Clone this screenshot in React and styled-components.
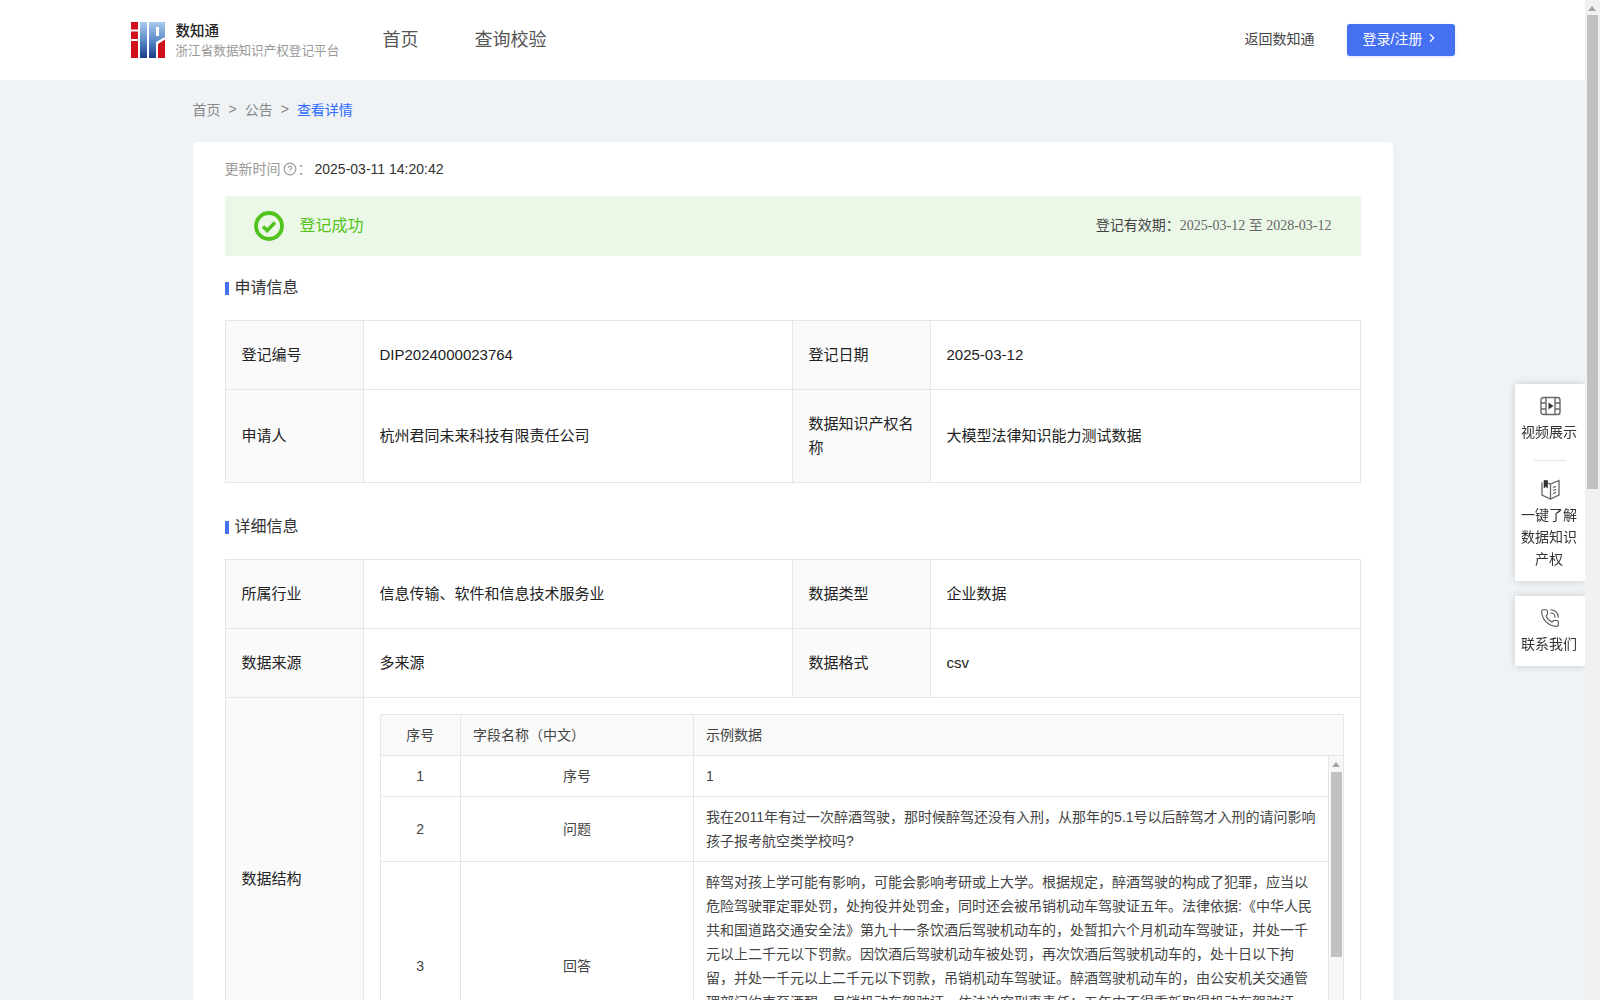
import React from "react";
import styled, { createGlobalStyle } from "styled-components";
import { ChevronRight, CircleHelp, PhoneCall } from "lucide-react";

const GlobalStyle = createGlobalStyle`
  html, body {
    margin: 0;
    height: 100%;
    overflow: hidden;
    background: #eff3f6;
    color: #333;
    font-family: "Liberation Sans", "Noto Sans CJK SC", sans-serif;
    font-size: 14px;
  }
  * { box-sizing: border-box; }
`;

const Page = styled.div`
  width: 1585px;
`;

const Header = styled.header`
  height: 80px;
  background: #fff;
  display: flex;
  justify-content: center;
`;

const HeaderInner = styled.div`
  width: 1324px;
  display: flex;
  align-items: center;
`;

const Brand = styled.div`
  display: flex;
  align-items: center;
  gap: 10px;
  width: 252px;
`;

const BrandText = styled.div`
  display: flex;
  flex-direction: column;
  gap: 2px;
  padding-top: 2px;
`;

const BrandName = styled.div`
  font-size: 14.5px;
  line-height: 18px;
  font-weight: 500;
  color: #222;
`;

const BrandSub = styled.div`
  font-size: 12.6px;
  line-height: 18px;
  color: #999;
`;

const Nav = styled.nav`
  display: flex;
  gap: 56px;
  flex: 1;
  padding-bottom: 4px;
`;

const NavLink = styled.a`
  font-size: 18px;
  color: #555;
`;

const BackLink = styled.a`
  font-size: 14px;
  color: #444;
  margin-right: 32px;
  padding-bottom: 4px;
`;

const LoginButton = styled.button`
  width: 108px;
  height: 32px;
  padding: 0 0 4px 16px;
  border: 0;
  border-radius: 3px;
  background: #4570f2;
  box-shadow: 0 1px 3px rgba(69, 112, 242, 0.2);
  color: #fff;
  font: inherit;
  font-size: 14px;
  display: flex;
  align-items: center;
  gap: 3px;
`;

const Main = styled.main`
  width: 1200px;
  margin: 0 auto;
`;

const Breadcrumb = styled.div`
  height: 62px;
  display: flex;
  align-items: center;
  gap: 8px;
  color: #888;
  padding-bottom: 4px;
`;

const CrumbCurrent = styled.span`
  color: #2f6bff;
`;

const Card = styled.div`
  background: #fff;
  border-radius: 4px;
  padding: 16px 32px 40px;
`;

const UpdateRow = styled.div`
  height: 22px;
  line-height: 22px;
  margin-bottom: 16px;
  display: flex;
  align-items: center;
  color: #999;
`;

const UpdateValue = styled.span`
  color: #333;
  margin-left: 3px;
`;

const Alert = styled.div`
  height: 60px;
  background: #ebf7e7;
  padding: 0 29px 0 29px;
  display: flex;
  align-items: center;
  margin-bottom: 19px;
`;

const AlertTitle = styled.div`
  flex: 1;
  margin-left: 16px;
  padding-bottom: 5px;
  font-size: 16px;
  color: #52c41a;
`;

const AlertDate = styled.div`
  color: #444;
  padding-bottom: 5px;
`;

const SerifDate = styled.span`
  font-family: "Liberation Serif", "Noto Sans CJK SC", serif;
  color: #666;
`;

const SectionTitle = styled.h3`
  margin: 0 0 21px;
  padding-top: 1px;
  height: 24px;
  font-size: 16px;
  font-weight: 400;
  line-height: 24px;
  color: #333;
  display: flex;
  align-items: center;
  gap: 6px;
  &::before {
    content: "";
    width: 4px;
    height: 13px;
    margin-top: 2px;
    background: #4570f2;
  }
`;

const InfoTable = styled.table`
  width: 1136px;
  table-layout: fixed;
  border-collapse: collapse;
  margin-bottom: 31px;
  font-size: 15px;
  line-height: 24px;
  th, td {
    border: 1px solid #e6e6e6;
    padding: 22px 16px;
    font-weight: 400;
    text-align: left;
    color: #222;
  }
  th {
    background: #fafafa;
  }
`;

const StructureCell = styled.td`
  && {
    padding: 16px;
  }
`;

const SampleBox = styled.div`
  width: 964px;
  border: 1px solid #e6e6e6;
  border-top: 0;
  border-bottom: 0;
`;

const SampleTable = styled.table`
  width: 100%;
  table-layout: fixed;
  border-collapse: collapse;
  font-size: 14px;
  line-height: 24px;
  && th, && td {
    padding: 8px 12px;
    border: 0;
    border-right: 1px solid #e6e6e6;
    border-bottom: 1px solid #e6e6e6;
    color: #444;
    font-size: 14px;
    line-height: 24px;
  }
  && th {
    background: #fafafa;
    border-top: 1px solid #e6e6e6;
  }
  && th:last-child {
    border-right: 0;
  }
  && td:last-child {
    border-right: 0;
    padding-right: 8px;
    color: #444;
  }
`;

const Centered = styled.td`
  text-align: center;
  && {
    text-align: center;
  }
`;

const CenteredHead = styled.th`
  && {
    text-align: center;
  }
`;

const SampleScroll = styled.div`
  position: relative;
  height: 288px;
  overflow: hidden;
  padding-right: 15px;
`;

const ScrollTrack = styled.div`
  position: absolute;
  top: 0;
  right: 0;
  bottom: 0;
  width: 15px;
  background: #f7f7f7;
  border-left: 1px solid #e6e6e6;
`;

const ScrollArrow = styled.div`
  position: absolute;
  top: ${(p) => p.$top}px;
  left: ${(p) => p.$left}px;
  width: 0;
  height: 0;
  border-left: 4px solid transparent;
  border-right: 4px solid transparent;
  border-bottom: 5px solid #a3a3a3;
`;

const ScrollThumb = styled.div`
  position: absolute;
  top: ${(p) => p.$top}px;
  left: ${(p) => p.$left}px;
  width: 11px;
  height: ${(p) => p.$height}px;
  background: #c1c1c1;
`;

const WindowScrollbar = styled.div`
  position: fixed;
  top: 0;
  right: 0;
  bottom: 0;
  width: 15px;
  background: #f1f1f1;
`;

const Sidebar = styled.aside`
  position: fixed;
  top: 384px;
  right: 15px;
  width: 70px;
  display: flex;
  flex-direction: column;
  gap: 15px;
`;

const SidePanel = styled.div`
  background: #fff;
  box-shadow: 0 0 8px rgba(0, 0, 0, 0.16);
  padding: 11px 0 11px;
  text-align: center;
  line-height: 22px;
  color: #333;
`;

const SideIcon = styled.div`
  height: 22px;
  display: flex;
  justify-content: center;
  align-items: center;
  margin-bottom: 4px;
`;

const SideDivider = styled.div`
  width: 32px;
  height: 1px;
  margin: 17px auto 17px;
  background: #e4e4e4;
`;

const SideLabel = styled.div`
  width: 58px;
  margin-left: 5px;
`;

function Logo() {
  return (
    <svg width="35" height="36" viewBox="0 0 35 36" style={{ display: "block" }}>
      <defs>
        <linearGradient id="logoBlue" x1="0" y1="0" x2="0" y2="1">
          <stop offset="0" stopColor="#a9cbee" />
          <stop offset="0.5" stopColor="#5d8cca" />
          <stop offset="1" stopColor="#1c3a8c" />
        </linearGradient>
      </defs>
      <path d="M0 0h7v7.5H0zM0 9.5h7v7.5H0zM0 19h7v17H0z" fill="#d0101a" />
      <rect x="9" width="7" height="36" fill="url(#logoBlue)" />
      <path
        d="M18 0H34V15L25 20V36H18ZM25 5V14L28 14V5Z"
        fillRule="evenodd"
        fill="url(#logoBlue)"
      />
      <path d="M27 22L34 17.5V36H27Z" fill="#d0101a" />
    </svg>
  );
}

function SuccessIcon() {
  return (
    <svg width="30" height="30" viewBox="0 0 30 30" style={{ flexShrink: 0 }}>
      <circle cx="15" cy="15" r="13" fill="none" stroke="#4fc31c" strokeWidth="3.8" />
      <path d="M9 15.5l4.2 4L21 11.5" fill="none" stroke="#4fc31c" strokeWidth="3.4" />
    </svg>
  );
}

function FilmIcon() {
  return (
    <svg width="21" height="20" viewBox="0 0 21 20" fill="none" stroke="#666" strokeWidth="1.4">
      <rect x="1" y="1.5" width="19" height="17" rx="2.5" />
      <path d="M6 1.5v17M15 1.5v17M1 7h5M1 13h5M15 7h5M15 13h5" />
      <path d="M8.5 6.5l5 3.5-5 3.5z" fill="#333" stroke="none" />
    </svg>
  );
}

function BookIcon() {
  return (
    <svg width="21" height="21" viewBox="0 0 21 21" fill="none" stroke="#666" strokeWidth="1.3">
      <path d="M4 2.5L10.5 5L19 1.5V16L10.5 20L2 16V3.5" />
      <path d="M10.5 5V20" />
      <path d="M4 1.5h3.5V9L5.7 7.5L4 9z" fill="#333" stroke="#333" strokeWidth="0.6" />
      <path d="M13 8.5l3-1.2M13 11.5l3-1.2M13 14.5l3-1.2" />
    </svg>
  );
}

const answer =
  "醉驾对孩上学可能有影响，可能会影响考研或上大学。根据规定，醉酒驾驶的构成了犯罪，应当以危险驾驶罪定罪处罚，处拘役并处罚金，同时还会被吊销机动车驾驶证五年。法律依据:《中华人民共和国道路交通安全法》第九十一条饮酒后驾驶机动车的，处暂扣六个月机动车驾驶证，并处一千元以上二千元以下罚款。因饮酒后驾驶机动车被处罚，再次饮酒后驾驶机动车的，处十日以下拘留，并处一千元以上二千元以下罚款，吊销机动车驾驶证。醉酒驾驶机动车的，由公安机关交通管理部门约束至酒醒，吊销机动车驾驶证，依法追究刑事责任；五年内不得重新取得机动车驾驶证。饮酒后或者醉酒驾驶机动车发生重大交通事故，构成犯罪的，依法追究刑事责任，并由公安机关交通管理部门吊销机动车驾驶证，终生不得重新取得机动车驾驶证。";

const sampleRows = [
  { no: 1, name: "序号", value: "1" },
  {
    no: 2,
    name: "问题",
    value: "我在2011年有过一次醉酒驾驶，那时候醉驾还没有入刑，从那年的5.1号以后醉驾才入刑的请问影响孩子报考航空类学校吗?",
  },
  { no: 3, name: "回答", value: answer },
];

function SampleCols() {
  return (
    <colgroup>
      <col style={{ width: 80 }} />
      <col style={{ width: 233 }} />
      <col />
    </colgroup>
  );
}

export default function App() {
  return (
    <Page>
      <GlobalStyle />
      <Header>
        <HeaderInner>
          <Brand>
            <Logo />
            <BrandText>
              <BrandName>数知通</BrandName>
              <BrandSub>浙江省数据知识产权登记平台</BrandSub>
            </BrandText>
          </Brand>
          <Nav>
            <NavLink>首页</NavLink>
            <NavLink>查询校验</NavLink>
          </Nav>
          <BackLink>返回数知通</BackLink>
          <LoginButton>
            登录/注册
            <ChevronRight size={14} />
          </LoginButton>
        </HeaderInner>
      </Header>

      <Main>
        <Breadcrumb>
          <span>首页</span>
          <span>&gt;</span>
          <span>公告</span>
          <span>&gt;</span>
          <CrumbCurrent>查看详情</CrumbCurrent>
        </Breadcrumb>

        <Card>
          <UpdateRow>
            更新时间
            <CircleHelp size={14} style={{ margin: "0 1px 0 2px" }} />：
            <UpdateValue>2025-03-11 14:20:42</UpdateValue>
          </UpdateRow>

          <Alert>
            <SuccessIcon />
            <AlertTitle>登记成功</AlertTitle>
            <AlertDate>
              登记有效期：<SerifDate>2025-03-12 至 2028-03-12</SerifDate>
            </AlertDate>
          </Alert>

          <SectionTitle>申请信息</SectionTitle>
          <InfoTable>
            <colgroup>
              <col style={{ width: 138 }} />
              <col style={{ width: 429 }} />
              <col style={{ width: 138 }} />
              <col />
            </colgroup>
            <tbody>
              <tr>
                <th>登记编号</th>
                <td>DIP2024000023764</td>
                <th>登记日期</th>
                <td>2025-03-12</td>
              </tr>
              <tr>
                <th>申请人</th>
                <td>杭州君同未来科技有限责任公司</td>
                <th>数据知识产权名称</th>
                <td>大模型法律知识能力测试数据</td>
              </tr>
            </tbody>
          </InfoTable>

          <SectionTitle>详细信息</SectionTitle>
          <InfoTable>
            <colgroup>
              <col style={{ width: 138 }} />
              <col style={{ width: 429 }} />
              <col style={{ width: 138 }} />
              <col />
            </colgroup>
            <tbody>
              <tr>
                <th>所属行业</th>
                <td>信息传输、软件和信息技术服务业</td>
                <th>数据类型</th>
                <td>企业数据</td>
              </tr>
              <tr>
                <th>数据来源</th>
                <td>多来源</td>
                <th>数据格式</th>
                <td>csv</td>
              </tr>
              <tr>
                <th>数据结构</th>
                <StructureCell colSpan={3}>
                  <SampleBox>
                    <SampleTable>
                      <SampleCols />
                      <thead>
                        <tr>
                          <CenteredHead>序号</CenteredHead>
                          <th>字段名称（中文）</th>
                          <th>示例数据</th>
                        </tr>
                      </thead>
                    </SampleTable>
                    <SampleScroll>
                      <SampleTable>
                        <SampleCols />
                        <tbody>
                          {sampleRows.map((row) => (
                            <tr key={row.no}>
                              <Centered>{row.no}</Centered>
                              <Centered>{row.name}</Centered>
                              <td>{row.value}</td>
                            </tr>
                          ))}
                        </tbody>
                      </SampleTable>
                      <ScrollTrack>
                        <ScrollArrow $top={6} $left={3} />
                        <ScrollThumb $top={16} $left={2} $height={185} />
                      </ScrollTrack>
                    </SampleScroll>
                  </SampleBox>
                </StructureCell>
              </tr>
            </tbody>
          </InfoTable>
        </Card>
      </Main>

      <Sidebar>
        <SidePanel>
          <SideIcon>
            <FilmIcon />
          </SideIcon>
          <SideLabel>视频展示</SideLabel>
          <SideDivider />
          <SideIcon>
            <BookIcon />
          </SideIcon>
          <SideLabel>一键了解数据知识产权</SideLabel>
        </SidePanel>
        <SidePanel>
          <SideIcon>
            <PhoneCall size={20} strokeWidth={1.3} color="#555" />
          </SideIcon>
          <SideLabel>联系我们</SideLabel>
        </SidePanel>
      </Sidebar>

      <WindowScrollbar>
        <ScrollArrow $top={6} $left={3} />
        <ScrollThumb $top={15} $left={2} $height={474} />
      </WindowScrollbar>
    </Page>
  );
}
